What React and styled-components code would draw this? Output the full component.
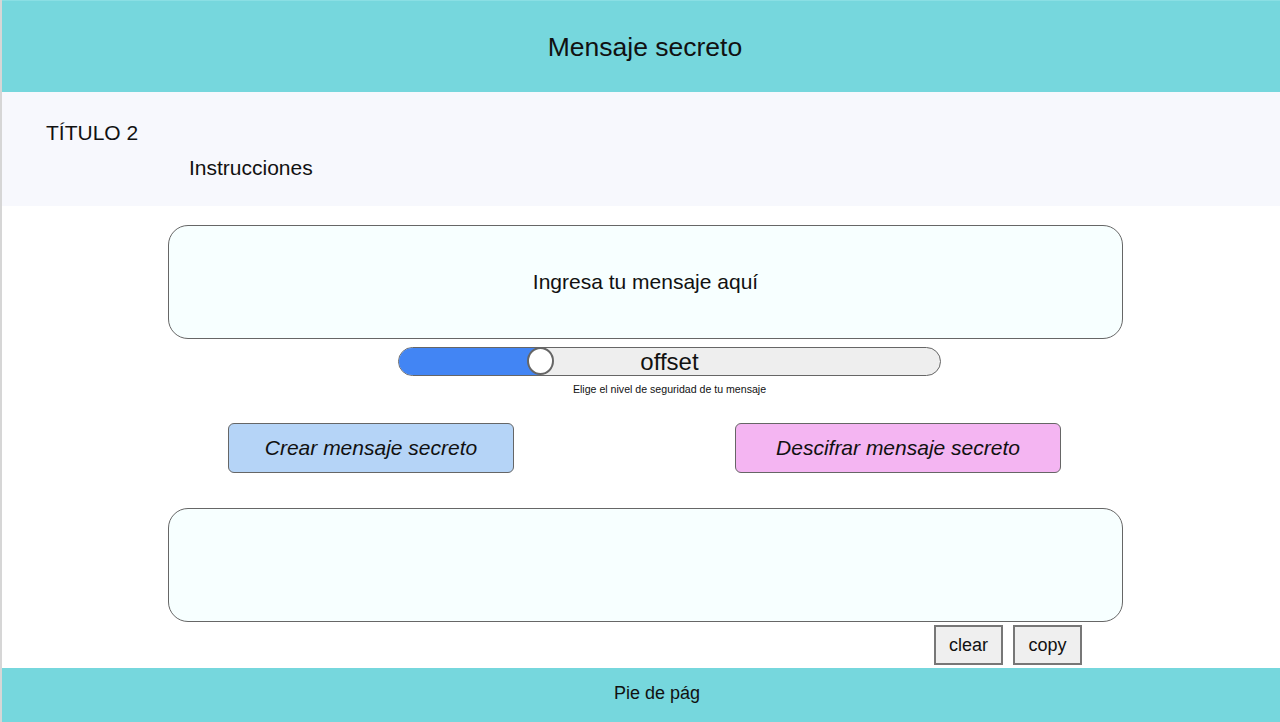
import React from "react";
import styled, { createGlobalStyle } from "styled-components";

const GlobalStyle = createGlobalStyle`
  html, body {
    margin: 0;
    padding: 0;
    background: #ffffff;
    font-family: "Liberation Sans", Arial, sans-serif;
  }
  * { box-sizing: border-box; }
`;

export default function App() {
  return (
    <>
      <GlobalStyle />
      <Page>
        <Header>
          <HeaderTitle>Mensaje secreto</HeaderTitle>
        </Header>
        <Intro>
          <Subtitle>TÍTULO 2</Subtitle>
          <Instructions>Instrucciones</Instructions>
        </Intro>
        <Main>
          <MessageBox top="19px">
            <BoxText>Ingresa tu mensaje aquí</BoxText>
          </MessageBox>
          <SliderWrap>
            <SliderTrack>
              <SliderFill />
              <SliderThumb />
              <SliderLabel>offset</SliderLabel>
            </SliderTrack>
            <SliderHint>Elige el nivel de seguridad de tu mensaje</SliderHint>
          </SliderWrap>
          <ActionRow>
            <ActionButton bg="#b5d4f7" width="286px">
              Crear mensaje secreto
            </ActionButton>
            <ActionButton bg="#f4b5f2" width="326px">
              Descifrar mensaje secreto
            </ActionButton>
          </ActionRow>
          <MessageBox top="35px" />
          <ToolRow>
            <ToolButton>clear</ToolButton>
            <ToolButton>copy</ToolButton>
          </ToolRow>
        </Main>
        <Footer>Pie de pág</Footer>
      </Page>
    </>
  );
}

const Page = styled.div`
  width: 1280px;
  height: 722px;
  display: flex;
  flex-direction: column;
  border-left: 2px solid #d6d6d6;
  overflow: hidden;
`;

const Header = styled.header`
  height: 92px;
  background-color: #76d7dd;
  border-top: 1px solid #8adfe4;
  display: flex;
  align-items: center;
  justify-content: center;
  padding: 2px 0 0 8px;
`;

const HeaderTitle = styled.h1`
  margin: 0;
  font-size: 26.5px;
  font-weight: 400;
  color: #111;
`;

const Intro = styled.section`
  height: 114px;
  background-color: #f7f8fd;
  padding: 29px 0 0 44px;
`;

const Subtitle = styled.div`
  font-size: 21px;
  color: #111;
`;

const Instructions = styled.div`
  font-size: 21px;
  color: #111;
  margin: 11px 0 0 143px;
`;

const Main = styled.main`
  flex: 1;
  display: flex;
  flex-direction: column;
  padding-left: 166px;
`;

const MessageBox = styled.div`
  width: 955px;
  height: 114px;
  margin-top: ${(props) => props.top || "0px"};
  background-color: #f7ffff;
  border: 1px solid #666;
  border-radius: 20px;
  display: flex;
  align-items: center;
  justify-content: center;
`;

const BoxText = styled.span`
  font-size: 21px;
  color: #111;
`;

const SliderWrap = styled.div`
  margin: 8px 0 0 230px;
  width: 543px;
  display: flex;
  flex-direction: column;
  align-items: center;
`;

const SliderTrack = styled.div`
  position: relative;
  width: 543px;
  height: 29px;
  background-color: #eeeeee;
  border: 1.5px solid #666;
  border-radius: 15px;
  overflow: hidden;
  display: flex;
  align-items: center;
  justify-content: center;
`;

const SliderFill = styled.div`
  position: absolute;
  left: 0;
  top: 0;
  bottom: 0;
  width: 142px;
  background-color: #4285f4;
`;

const SliderThumb = styled.div`
  position: absolute;
  left: 128px;
  top: -1px;
  width: 27px;
  height: 28px;
  border-radius: 50%;
  background-color: #ffffff;
  border: 2px solid #666;
`;

const SliderLabel = styled.span`
  position: relative;
  font-size: 24px;
  color: #111;
`;

const SliderHint = styled.div`
  margin-top: 7px;
  font-size: 10.6px;
  color: #111;
`;

const ActionRow = styled.div`
  display: flex;
  justify-content: space-between;
  margin: 28px 0 0 60px;
  width: 833px;
`;

const ActionButton = styled.button`
  width: ${(props) => props.width};
  height: 50px;
  background-color: ${(props) => props.bg};
  border: 1px solid #666;
  border-radius: 6px;
  font-family: "Liberation Sans", Arial, sans-serif;
  font-size: 21px;
  font-style: italic;
  color: #111;
  cursor: pointer;
`;

const ToolRow = styled.div`
  display: flex;
  gap: 10px;
  margin: 3px 0 0 766px;
`;

const ToolButton = styled.button`
  width: 69px;
  height: 40px;
  background-color: #efefef;
  border: 2px solid #777;
  font-family: "Liberation Sans", Arial, sans-serif;
  font-size: 18px;
  color: #111;
  cursor: pointer;
`;

const Footer = styled.footer`
  height: 54px;
  background-color: #76d7dd;
  display: flex;
  align-items: center;
  justify-content: center;
  padding: 0 0 4px 32px;
  font-size: 18px;
  color: #111;
`;
